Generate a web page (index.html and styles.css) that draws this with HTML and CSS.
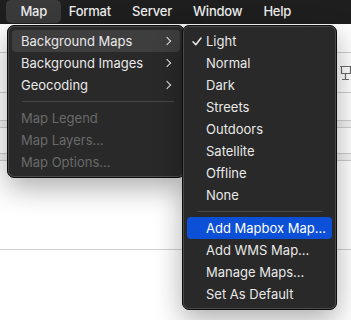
FILE: index.html
```html
<!DOCTYPE html>
<html lang="en">
<head>
  <meta charset="UTF-8">
  <title>Map menu</title>
  <link rel="stylesheet" href="styles.css">
</head>
<body>
  <div class="menubar">
    <span class="menubar-item menubar-cut">Tools</span>
    <span class="menubar-item active">Map</span>
    <span class="menubar-item">Format</span>
    <span class="menubar-item">Server</span>
    <span class="menubar-item">Window</span>
    <span class="menubar-item">Help</span>
  </div>

  <div class="sheet">
    <div class="sheet-row r1"></div>
    <div class="sheet-row r2">
      <svg class="easel" width="11" height="16" viewBox="0 0 11 16">
        <path d="M0 1.5H11M1.5 1.5V8.5H10.5V1.5M5.5 8.5V14.5M2 14.5H9" fill="none" stroke="#6b6b6b" stroke-width="1.2"/>
      </svg>
    </div>
    <div class="sheet-row r3"></div>
    <div class="sheet-row band"></div>
    <div class="sheet-row r5"></div>
    <div class="sheet-row band"></div>
    <div class="sheet-row r7"></div>
  </div>

  <div class="menu menu-main">
    <div class="menu-row open"><span>Background Maps</span><span class="chevron"></span></div>
    <div class="menu-row"><span>Background Images</span><span class="chevron"></span></div>
    <div class="menu-row"><span>Geocoding</span><span class="chevron"></span></div>
    <div class="menu-sep"></div>
    <div class="menu-row disabled">Map Legend</div>
    <div class="menu-row disabled">Map Layers...</div>
    <div class="menu-row disabled">Map Options...</div>
  </div>

  <div class="menu menu-sub">
    <div class="menu-row"><span class="check">
      <svg width="10" height="9" viewBox="0 0 10 9"><path d="M1 4.8L3.8 7.8L9 1" fill="none" stroke="#e8e8e8" stroke-width="1.5" stroke-linecap="round" stroke-linejoin="round"/></svg>
    </span>Light</div>
    <div class="menu-row"><span class="check"></span>Normal</div>
    <div class="menu-row"><span class="check"></span>Dark</div>
    <div class="menu-row"><span class="check"></span>Streets</div>
    <div class="menu-row"><span class="check"></span>Outdoors</div>
    <div class="menu-row"><span class="check"></span>Satellite</div>
    <div class="menu-row"><span class="check"></span>Offline</div>
    <div class="menu-row"><span class="check"></span>None</div>
    <div class="menu-sep"></div>
    <div class="menu-row selected"><span class="check"></span>Add Mapbox Map...</div>
    <div class="menu-row"><span class="check"></span>Add WMS Map...</div>
    <div class="menu-row"><span class="check"></span>Manage Maps...</div>
    <div class="menu-row"><span class="check"></span>Set As Default</div>
  </div>
</body>
</html>
```

FILE: styles.css
```css
:root {
  --bar-bg: #1e1e1e;
  --menu-bg: #292929;
  --menu-hover: #3e3e3e;
  --menu-text: #e8e8e8;
  --menu-dim: #6a6a6a;
  --menu-sep: #474747;
  --accent: #0b50d7;
  --line: #cfcfcf;
}

* {
  box-sizing: border-box;
}

body {
  margin: 0;
  width: 351px;
  height: 320px;
  overflow: hidden;
  position: relative;
  background: #fff;
  font-family: Inter, "Noto Sans", sans-serif;
  font-size: 13px;
  color: var(--menu-text);
}

/* menu bar */
.menubar {
  height: 24px;
  background: var(--bar-bg);
  display: flex;
  align-items: flex-start;
  white-space: nowrap;
}

.menubar-item {
  height: 23px;
  line-height: 23px;
  padding: 0 10.5px;
  font-weight: 500;
  letter-spacing: -0.2px;
  color: #ececec;
}

.menubar-cut {
  margin-left: -44px;
}

.menubar-item.active {
  background: #3a3a3a;
  border-radius: 5px;
  padding: 0 14px;
  margin: 0 -3px 0 -3px;
}

/* document behind the menus */
.sheet-row {
  border-bottom: 1px solid var(--line);
}

.r1 { height: 29px; }
.r2 {
  height: 40px;
  display: flex;
  justify-content: flex-end;
  align-items: flex-start;
  padding-top: 12px;
}
.r3 { height: 28px; }
.band { height: 7px; background: #f3f3f3; }
.r5 { height: 26px; }
.r7 { height: 89px; }

/* menus */
.menu {
  position: absolute;
  top: 25px;
  background: var(--menu-bg);
  border: 1px solid #0c0c0c;
  border-radius: 7px;
  padding: 4px;
  box-shadow: inset 0 0 0 1px rgba(255,255,255,0.16), 0 10px 28px rgba(0,0,0,0.32);
  white-space: nowrap;
}

.menu-main {
  left: 7px;
  width: 178px;
}

.menu-sub {
  left: 182px;
  width: 155px;
}

.menu-row {
  height: 22px;
  line-height: 22px;
  display: flex;
  align-items: center;
  border-radius: 4px;
}

.menu-main .menu-row {
  padding: 0 7px 0 9px;
  justify-content: space-between;
}

.menu-row.open {
  background: var(--menu-hover);
}

.menu-row.selected {
  background: var(--accent);
  color: #fff;
}

.menu-row.disabled {
  color: var(--menu-dim);
}

.chevron {
  width: 6px;
  height: 6px;
  border-top: 1.6px solid var(--menu-text);
  border-right: 1.6px solid var(--menu-text);
  transform: rotate(45deg);
  margin-right: 3px;
}

.check {
  width: 19px;
  padding-left: 5px;
  display: flex;
  align-items: center;
}

.menu-sep {
  height: 1px;
  background: var(--menu-sep);
  margin: 5px 6px 5px 10px;
}

.menu-sub .menu-sep {
  margin: 5px 9px 5px 10px;
}
```
